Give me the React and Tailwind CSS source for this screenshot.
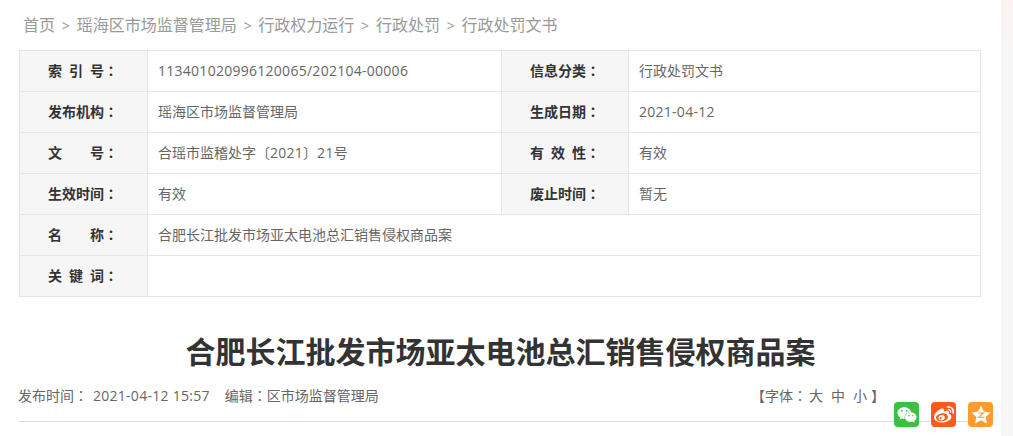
import { FaWeixin, FaWeibo } from 'react-icons/fa';

const font = 'font-["Open_Sans","Noto_Sans_CJK_SC",sans-serif]';

function Colon() {
  return <span className='font-["Noto_Sans_CJK_TC"]'>：</span>;
}

function Num({ children }) {
  return <span className="tracking-[0.27px]">{children}</span>;
}

function Label({ children }) {
  return (
    <th className="w-[128px] border border-[#e6e6e6] bg-[#f6f6f6] p-0 pb-[2px] pl-[28px] text-left text-[14px] font-bold text-[#333] whitespace-pre">
      {children}<Colon />
    </th>
  );
}

function Value({ children, span }) {
  return <td colSpan={span} className="border border-[#e6e6e6] pt-0 pb-[2px] pl-[10px] text-[14px] text-[#666]">{children}</td>;
}

function Sep() {
  return <span className="text-[14px]">&gt;</span>;
}

export default function App() {
  return (
    <div className={`${font} relative h-[436px] w-[1013px] overflow-hidden bg-white`}>
      <div className="flex h-full">
        <div className="h-full w-[1001px] px-[19px]">
          <div className="flex h-[50px] items-center gap-[6.8px] pl-[4px] text-[16px] text-[#999]">
            <span>首页</span>
            <Sep />
            <span>瑶海区市场监督管理局</span>
            <Sep />
            <span>行政权力运行</span>
            <Sep />
            <span>行政处罚</span>
            <Sep />
            <span>行政处罚文书</span>
          </div>

          <table className="h-[247px] w-[962px] table-fixed border-collapse">
            <colgroup>
              <col className="w-[128px]" />
              <col className="w-[354px]" />
              <col className="w-[127px]" />
              <col />
            </colgroup>
            <tbody>
              <tr className="h-[41px]">
                <Label>索{'\u2002'}引{'\u2002'}号</Label>
                <Value><Num>113401020996120065/202104-00006</Num></Value>
                <Label>信息分类</Label>
                <Value>行政处罚文书</Value>
              </tr>
              <tr className="h-[41px]">
                <Label>发布机构</Label>
                <Value>瑶海区市场监督管理局</Value>
                <Label>生成日期</Label>
                <Value><Num>2021-04-12</Num></Value>
              </tr>
              <tr className="h-[41px]">
                <Label>文{'\u3000\u3000'}号</Label>
                <Value>合瑶市监稽处字〔<Num>2021</Num>〕<Num>21</Num>号</Value>
                <Label>有{'\u2002'}效{'\u2002'}性</Label>
                <Value>有效</Value>
              </tr>
              <tr className="h-[41px]">
                <Label>生效时间</Label>
                <Value>有效</Value>
                <Label>废止时间</Label>
                <Value>暂无</Value>
              </tr>
              <tr className="h-[41px]">
                <Label>名{'\u3000\u3000'}称</Label>
                <Value span={3}>合肥长江批发市场亚太电池总汇销售侵权商品案</Value>
              </tr>
              <tr className="h-[41px]">
                <Label>关{'\u2002'}键{'\u2002'}词</Label>
                <Value span={3}></Value>
              </tr>
            </tbody>
          </table>

          <h1 className="mt-[31px] text-center text-[30px] leading-[48px] font-bold text-[#333]">合肥长江批发市场亚太电池总汇销售侵权商品案</h1>

          <div className="mt-[7px] flex h-[39px] items-center justify-between border-b border-[#ddd] pb-[13px] text-[14px] text-[#666]">
            <div className="-ml-[1px] flex">
              <span>发布时间<Colon /></span>
              <span className="ml-[5px]"><Num>2021-04-12 15:57</Num></span>
              <span className="ml-[15px]">编辑<Colon />区市场监督管理局</span>
            </div>
            <div className="mr-[97px] flex">
              <span>【字体<Colon /></span>
              <span className="ml-[2px]">大</span>
              <span className="ml-[8px]">中</span>
              <span className="ml-[8px]">小</span>
              <span className="ml-[4px]">】</span>
            </div>
          </div>
        </div>
        <div className="h-full flex-1 bg-gradient-to-b from-[#fbf3f2] to-[#f7f7f7] to-[15%]"></div>
      </div>

      <div className="absolute top-[402px] left-[894px] flex gap-[12px]">
        <span className="flex h-[25px] w-[25px] items-center justify-center rounded-[4px] bg-[#3bc13f] text-white">
          <FaWeixin size={20} />
        </span>
        <span className="flex h-[25px] w-[25px] items-center justify-center rounded-[4px] bg-[#fb5a1c] text-white">
          <FaWeibo size={20} />
        </span>
        <span className="flex h-[25px] w-[25px] items-center justify-center rounded-[4px] bg-[#fe9a2e]">
          <svg width="22" height="22" viewBox="0 0 22 22">
            <path d="M11 1.500l2.900 6 6.600.9-4.800 4.500 1.200 6.600-5.900-3.200-5.900 3.200 1.200-6.600-4.800-4.500 6.600-.9z" fill="#fff" />
            <path d="M8.300 9h5.400l-5 4.200h5.600" fill="none" stroke="#fe9a2e" strokeWidth="1.100" />
          </svg>
        </span>
      </div>
    </div>
  );
}
